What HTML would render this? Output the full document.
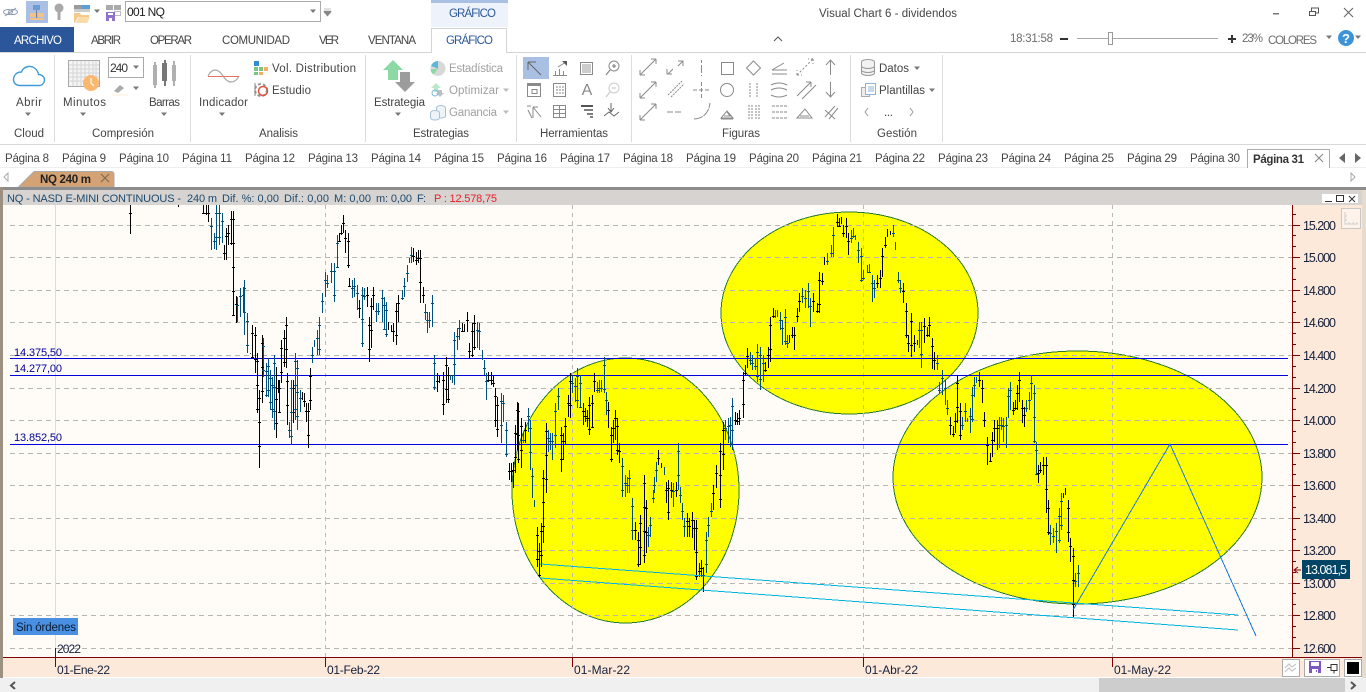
<!DOCTYPE html>
<html lang="es"><head><meta charset="utf-8"><title>Visual Chart 6 - dividendos</title>
<style>
html,body{margin:0;padding:0;width:1366px;height:692px;overflow:hidden;background:#fff}
svg{display:block;font-family:"Liberation Sans",sans-serif;font-size:11.5px;fill:#444}
.g{fill:#a0a0a0}.ic{fill:none;stroke:#8a8a8a;stroke-width:1}
.ax{fill:#14203c;font-size:12.5px}.dt{fill:#14203c;font-size:12px}
.h{fill:#1c4a70;font-size:11px}.lb{fill:#000090;font-size:11px}
.c{shape-rendering:crispEdges}
</style></head><body>
<svg width="1366" height="692" viewBox="0 0 1366 692" xmlns="http://www.w3.org/2000/svg">
<defs>
<path id="da" d="M-8 8L8-8M-8 8h5M-8 8v-5M8-8h-5M8-8v5" fill="none" stroke="#8a8a8a"/>
<path id="ar" d="M-3-1.5h6L0 2z" fill="#777"/>
</defs>
<rect width="1366" height="692" fill="#fff"/>

<!-- quick access -->
<g fill="none" stroke="#8b9bb0"><ellipse cx="8" cy="12" rx="4.5" ry="2.5"/><ellipse cx="13" cy="12" rx="4.5" ry="2.5"/><path d="M5 16L16 8"/></g>
<rect x="26" y="1" width="22" height="22" fill="#a9c0e4"/>
<g class="c"><rect x="33" y="5" width="7" height="5" fill="#6f9bd3"/><rect x="30" y="13" width="6" height="4" fill="#f2c289"/><rect x="38" y="13" width="6" height="4" fill="#f2c289"/><rect x="30" y="18" width="14" height="2" fill="#f2c289"/><rect x="36" y="10" width="1" height="8" fill="#6f7f99"/></g>
<g fill="#a8a8a8"><circle cx="59" cy="8" r="4.5"/><rect x="57.500" y="11" width="3" height="9"/></g>
<g class="c"><rect x="74" y="5" width="8" height="4" fill="#9a9a9a"/><rect x="82" y="5" width="8" height="4" fill="#5aa0d8"/><rect x="74" y="9" width="16" height="3" fill="#ccc"/></g>
<path d="M74 22V13h6l1 2h8v2h-11l-3 6z" fill="#f5c98a"/><path d="M76 23l3-6h11l-3 6z" fill="#f9dca8"/>
<use href="#ar" x="97" y="11"/>
<g class="c"><rect x="106" y="5" width="7" height="5" fill="#aaa"/><rect x="114" y="5" width="7" height="5" fill="#aaa"/><rect x="114.500" y="11.500" width="6" height="4" fill="none" stroke="#bbb"/><rect x="106" y="12" width="9" height="9" fill="#8f72c9"/><rect x="108" y="13" width="5" height="2" fill="#fff"/><rect x="109" y="18" width="3" height="3" fill="#fff"/></g>
<rect x="125.500" y="1.500" width="195" height="20" fill="#fff" stroke="#ababab" class="c"/>
<text x="127" y="16" textLength="38" fill="#222" style="fill:#222;font-size:12px">001 NQ</text>
<use href="#ar" x="313" y="11"/>
<path d="M324 9h7M324 11h7v1l-3.500 4-3.500-4z" fill="#888" stroke="#888" stroke-width=".6"/>

<!-- contextual tab header -->
<rect x="431" y="0" width="77" height="27" fill="#eef3fb" class="c"/><rect x="431" y="0" width="77" height="3" fill="#a9c0e4" class="c"/>
<text x="449" y="17" textLength="47" style="fill:#2b579a">GRÁFICO</text>
<text x="819" y="17" textLength="138">Visual Chart 6 - dividendos</text>

<!-- window controls -->
<path d="M1273 13.500h6" stroke="#777" stroke-width="1.500" class="c"/>
<g fill="none" stroke="#555" class="c"><rect x="1309.500" y="11.500" width="6" height="4"/><path d="M1311.500 11v-3h7v5h-3"/></g>
<path d="M1344 8l9 9M1353 8l-9 9" stroke="#666" stroke-width="1.100"/>

<!-- zoom + clock -->
<text x="1010" y="42" textLength="43" style="fill:#6c6c6c">18:31:58</text>
<rect x="1060" y="38" width="8" height="2" fill="#333" class="c"/>
<rect x="1077" y="38" width="141" height="1" fill="#a8a8a8" class="c"/>
<rect x="1108.500" y="32.500" width="4" height="12" fill="#fff" stroke="#999" class="c"/>
<path d="M1228 39h8M1232 35v8" stroke="#333" stroke-width="2" class="c"/>
<text x="1242" y="42" textLength="21" style="fill:#6c6c6c">23%</text>
<text x="1268" y="44" textLength="49" style="fill:#6c6c6c">COLORES</text>
<use href="#ar" x="1329" y="37"/>
<circle cx="1346" cy="38" r="8" fill="#3d93d8"/><text x="1342" y="43" style="fill:#fff;font-size:13px;font-weight:bold">?</text>
<use href="#ar" x="1358" y="37"/>
<path d="M774 41l4-4 4 4" fill="none" stroke="#555"/>

<!-- ribbon tabs -->
<rect x="0" y="27" width="74" height="25" fill="#2b579a" class="c"/>
<text x="14" y="44" textLength="48" style="fill:#fff">ARCHIVO</text>
<text x="91" y="44" textLength="30">ABRIR</text>
<text x="150" y="44" textLength="42">OPERAR</text>
<text x="222" y="44" textLength="68">COMUNIDAD</text>
<text x="319" y="44" textLength="20">VER</text>
<text x="368" y="44" textLength="48">VENTANA</text>
<path d="M0 52.500H431.500V28.500H506.500V52.500H1366" fill="#fff" stroke="#d4d4d4" class="c"/>
<text x="446" y="44" textLength="47" style="fill:#2b579a">GRÁFICO</text>
<rect x="0" y="144" width="1366" height="1" fill="#d8d8d8" class="c"/>
<path d="M54.500 55V142M190.500 55V142M365.500 55V142M516.500 55V142M631.500 55V142M850.500 55V142M942.500 55V142" stroke="#dcdcdc" class="c"/>

<!-- group: cloud -->
<path d="M20 85.500H39C43 85.500 44.500 82 44.500 80C44.500 76 41 74.500 38.500 74.500C37.500 69 33 66 28.500 66.500C25 67 22.500 69 21.500 72C16 72 13.500 76 13.500 79.500C13.500 83 16 85.500 20 85.500Z" fill="#fff" stroke="#3d9bd9" stroke-width="1.400"/>
<text x="16" y="106" textLength="26">Abrir</text><use href="#ar" x="28" y="114"/>
<text x="14" y="137" textLength="30">Cloud</text>

<!-- group: compresion -->
<g class="c"><rect x="68.500" y="60.500" width="31" height="26" fill="#f4f4f4" stroke="#aaa"/>
<path d="M73 61v25M77 61v25M81 61v25M85 61v25M89 61v25M93 61v25M96 61v25M69 65h30M69 69h30M69 73h30M69 77h30M69 81h30" stroke="#d5d5d5"/></g>
<circle cx="91" cy="83" r="8" fill="#fbb76e"/><path d="M91 78v5l3 3" stroke="#fff" stroke-width="1.200" fill="none"/>
<text x="63" y="106" textLength="43">Minutos</text><use href="#ar" x="83" y="114"/>
<rect x="108.500" y="57.500" width="35" height="20" fill="#fff" stroke="#aaa" class="c"/>
<text x="110" y="72" textLength="18" style="font-size:12px;fill:#333">240</text><use href="#ar" x="136" y="67"/>
<path d="M114 91l6-6 4 3-6 5z" fill="#aaa"/><use href="#ar" x="136" y="88"/>
<path d="M112 95h16" stroke="#fbeed8"/>
<g class="c" fill="#b0b0b0"><rect x="153" y="65" width="4" height="20"/><rect x="154" y="62" width="2" height="26"/><rect x="162" y="63" width="5" height="18" fill="#777"/><rect x="164" y="60" width="2" height="26" fill="#777"/><rect x="172" y="65" width="4" height="16"/><rect x="173" y="61" width="2" height="25"/></g>
<text x="149" y="106" textLength="31">Barras</text><use href="#ar" x="164" y="114"/>
<text x="92" y="137" textLength="62">Compresión</text>

<!-- group: analisis -->
<path d="M208 76C212 68 218 68 223 76S235 84 239 76" fill="none" stroke="#aaa" stroke-width="1.200"/>
<path d="M208 76.500h31" stroke="#e87460" class="c"/>
<text x="199" y="106" textLength="49">Indicador</text><use href="#ar" x="222" y="114"/>
<g class="c"><rect x="254" y="61" width="5" height="5" fill="#2f8fd0"/><rect x="254" y="67" width="4" height="4" fill="#7cc47f"/><rect x="259" y="67" width="4" height="4" fill="#7cc47f"/><rect x="264" y="67" width="4" height="4" fill="#f0b060"/><rect x="254" y="72" width="4" height="3" fill="#7cc47f"/><rect x="259" y="72" width="4" height="3" fill="#f0b060"/></g>
<text x="272" y="72" textLength="84">Vol. Distribution</text>
<circle cx="261" cy="90" r="6" fill="none" stroke="#999" stroke-width="2" stroke-dasharray="3 2"/><circle cx="263" cy="91" r="4.500" fill="none" stroke="#e0533d" stroke-width="1.500"/><path d="M255 83v13" stroke="#888"/>
<text x="272" y="94" textLength="39">Estudio</text>
<text x="259" y="137" textLength="39">Analisis</text>

<!-- group: estrategias -->
<path d="M393 60l10 10h-5v10h-10V70h-5z" fill="#8cd9a5"/>
<path d="M405 92l10-10h-5V72h-10v10h-5z" fill="#9c9c9c"/>
<text x="374" y="106" textLength="51">Estrategia</text><use href="#ar" x="398" y="114"/>
<circle cx="438" cy="68.500" r="7.500" fill="#d8d8d8"/><path d="M438 68.500V61a7.500 7.500 0 0 0-7 5z" fill="#5bb8d8"/><path d="M438 68.500l-7.500 1a7.500 7.500 0 0 0 3 5z" fill="#8cd9a5"/>
<text x="449" y="72" textLength="54" class="g">Estadística</text>
<path d="M436 83l5 5h-3v4h-4v-4h-3z" fill="#bde8c8"/><path d="M440 97l4-4h-2v-3h-4v3h-2z" fill="#c0c0c0"/><circle cx="435" cy="93" r="3" fill="none" stroke="#7eb8e0"/>
<text x="449" y="94" textLength="50" class="g">Optimizar</text><use href="#ar" x="506" y="90" opacity=".5"/>
<g fill="#eef3f8" stroke="#a8c0d8"><ellipse cx="441" cy="108" rx="4.500" ry="2.500"/><path d="M436.500 108v8a4.500 2 0 0 0 9 0v-8"/><ellipse cx="435" cy="113" rx="4.500" ry="2.500"/><path d="M430.500 113v5a4.500 2 0 0 0 9 0v-5"/></g>
<text x="449" y="116" textLength="48" class="g">Ganancia</text><use href="#ar" x="506" y="112" opacity=".5"/>
<text x="413" y="137" textLength="56">Estrategias</text>

<!-- group: herramientas -->
<rect x="523" y="57" width="26" height="22" fill="#a9c0e4" class="c"/>
<g class="ic">
<path d="M541 75L528 62M528 62h8M528 62v8" stroke="#666"/>
<path d="M553 75.500h14M555.500 75v-4M559.500 75v-6M563.500 75v-4M558 67l8-5"/><path d="M562 61h5v5z" fill="#555" stroke="none"/>
<rect x="580.500" y="62.500" width="12" height="12"/><rect x="582" y="64" width="9" height="9" fill="#ccc" stroke="none"/>
<circle cx="614" cy="66" r="5"/><path d="M610 70l-4 5M612 66h4M614 64v4" stroke-width="1.300"/>
<rect x="527.500" y="83.500" width="13" height="13"/><path d="M527 85h14" stroke-width="2"/><rect x="532" y="89.500" width="5" height="4"/>
<rect x="553.500" y="83.500" width="12" height="13"/><path d="M557 86v8M560 86v8M563 86v8" stroke-dasharray="2 1"/>
<circle cx="614" cy="88" r="5" stroke="#ccc"/><path d="M610 92l-4 5M612 88h4" stroke="#ccc" stroke-width="1.300"/>
<path d="M527 106h4M532 118l-4-8M533 118v-11M533 107l8 10M533 107h5M533 107v5"/>
<rect x="553.500" y="105.500" width="12" height="12"/><path d="M554 109.500h11M554 113.500h11M559.500 106v11"/>
<path d="M581 106h12" stroke="#555" stroke-width="2"/><path d="M584 110h9M587 114h6M590 117h3" stroke="#555" stroke-width="1.500"/>
<path d="M604 116l5-4 5 4 5-4M611 103v9M608 108l3 4 3-4" stroke="#666"/>
</g>
<text x="587" y="95" text-anchor="middle" style="font-size:16px;fill:#8a8a8a">A</text>
<text x="540" y="137" textLength="68">Herramientas</text>

<!-- group: figuras -->
<use href="#da" x="648" y="67"/><use href="#da" x="648" y="90"/><use href="#da" x="648" y="112"/>
<g class="ic">
<path d="M668 74l5-5M672 74h-5v-5M678 66l5-5M678 61h5v5"/>
<path d="M701.500 60v3M701.500 65v8M701.500 75v1"/>
<rect x="721.500" y="62.500" width="12" height="12"/>
<path d="M753.500 61l7 7-7 7-7-7z"/>
<path d="M772 74h15M772 70h15M772 70l12-7" />
<use href="#da" x="805" y="67" stroke-dasharray="2 2"/>
<path d="M830.500 75V60M826 65l4.500-5 4.500 5"/>
<path d="M668 95l14-14M671 97l13-13" stroke-dasharray="2 1"/>
<path d="M693 90h16M701.500 82v16" stroke-dasharray="4 2"/>
<circle cx="727" cy="90" r="6.500"/>
<path d="M750 83v14M757 83v14" stroke-dasharray="2 1"/>
<path d="M771 85q8-4 16 0M771 90q8-4 16 0M771 95q8 4 16 0"/>
<path d="M797 96l14-14M802 99l14-14M811 82h-5M811 82v5"/>
<path d="M830.500 82v15M826 92l4.500 5 4.500-5"/>
<path d="M667 112h16" stroke-dasharray="6 2"/>
<path d="M694 119q14-1 16-16" stroke-dasharray="9 1"/>
<path d="M721 118h12l-6-7zM724 116h6l-3-4M721 119h12"/>
<path d="M749 105v14M752 105v14M756 105v14M759 105v14" stroke-dasharray="2 1"/>
<path d="M772 106h15M772 112h15M772 118h15" stroke-dasharray="3 1"/>
<path d="M797 118h15l-7-9zM800 116h9"/>
<path d="M825 117l10-11M829 119l9-11M825 110l10 9"/>
</g>
<text x="722" y="137" textLength="38">Figuras</text>

<!-- group: gestion -->
<g fill="#f2f2f2" stroke="#999"><ellipse cx="868" cy="62" rx="6.500" ry="2.500"/><path d="M861.500 62v11a6.500 2.500 0 0 0 13 0V62"/><path d="M861.500 66a6.500 2.500 0 0 0 13 0M861.500 70a6.500 2.500 0 0 0 13 0" fill="none"/></g>
<text x="879" y="72" textLength="30">Datos</text><use href="#ar" x="917" y="68"/>
<g class="c"><rect x="861.500" y="87.500" width="8" height="9" fill="#eee" stroke="#aaa"/><rect x="865.500" y="83.500" width="10" height="11" fill="#fff" stroke="#8db4dc"/><path d="M868 87h6M868 89h6M868 91h6" stroke="#8db4dc"/></g>
<text x="879" y="94" textLength="46">Plantillas</text><use href="#ar" x="932" y="90"/>
<path d="M868 108l-3 4 3 4M910 108l3 4-3 4" fill="none" stroke="#999"/>
<text x="884" y="116" textLength="9">...</text>
<text x="877" y="137" textLength="40">Gestión</text>

<!-- page tabs -->
<rect x="0" y="167" width="1366" height="1" fill="#eee" class="c"/>
<g>
<text x="5" y="162" textLength="44">Página 8</text><text x="62" y="162" textLength="44">Página 9</text>
<text x="119" y="162" textLength="50">Página 10</text><text x="182" y="162" textLength="50">Página 11</text>
<text x="245" y="162" textLength="50">Página 12</text><text x="308" y="162" textLength="50">Página 13</text>
<text x="371" y="162" textLength="50">Página 14</text><text x="434" y="162" textLength="50">Página 15</text>
<text x="497" y="162" textLength="50">Página 16</text><text x="560" y="162" textLength="50">Página 17</text>
<text x="623" y="162" textLength="50">Página 18</text><text x="686" y="162" textLength="50">Página 19</text>
<text x="749" y="162" textLength="50">Página 20</text><text x="812" y="162" textLength="50">Página 21</text>
<text x="875" y="162" textLength="50">Página 22</text><text x="938" y="162" textLength="50">Página 23</text>
<text x="1001" y="162" textLength="50">Página 24</text><text x="1064" y="162" textLength="50">Página 25</text>
<text x="1127" y="162" textLength="50">Página 29</text><text x="1190" y="162" textLength="50">Página 30</text>
</g>
<path d="M1247.500 168V149.500H1329.500V168" fill="#fff" stroke="#aaa" class="c"/>
<text x="1253" y="163" textLength="51" style="font-weight:bold;fill:#333">Página 31</text>
<path d="M1315 154l8 8M1323 154l-8 8" stroke="#888" stroke-width="1.100"/>
<path d="M1345 153v10l-6-5zM1355 153v10l6-5z" fill="#666"/>

<!-- document tab row -->
<path d="M8 173v8l-4-4z" fill="none" stroke="#aaa"/>
<path d="M18.500 187L34 171.500H111q3 0 3 3V187z" fill="#d4a273" stroke="#aaa"/>
<text x="40" y="183" textLength="51" style="font-weight:bold;fill:#222;font-size:11.500px">NQ 240 m</text>
<path d="M101 174l8 8M109 174l-8 8" stroke="#7f6a55" stroke-width="1.200"/>
<path d="M1351 173v8l4-4z" fill="none" stroke="#aaa"/>

<!-- chart frame -->
<rect x="0" y="187" width="1366" height="3" fill="#8c8c8c" class="c"/>
<rect x="0" y="187" width="3" height="491" fill="#9c9080" class="c"/>
<rect x="3" y="190" width="1360" height="15" fill="#d6d3d0" class="c"/>
<text x="7" y="202" textLength="174" class="h">NQ - NASD E-MINI CONTINUOUS -</text>
<text x="187" y="202" textLength="30" class="h">240 m</text>
<text x="222" y="202" textLength="57" class="h">Dif. %: 0,00</text>
<text x="284" y="202" textLength="45" class="h">Dif.: 0,00</text>
<text x="334" y="202" textLength="37" class="h">M: 0,00</text>
<text x="376" y="202" textLength="36" class="h">m: 0,00</text>
<text x="417" y="202" textLength="9" class="h">F:</text>
<text x="434" y="202" textLength="63" style="font-size:11px;fill:#ee1c25">P : 12.578,75</text>
<rect x="1322" y="194" width="36" height="9" fill="#fff" class="c"/>
<path d="M1325 201.500h7" stroke="#333" class="c"/><rect x="1336.500" y="195.500" width="7" height="6" fill="none" stroke="#333" class="c"/><path d="M1349 196l6 6M1355 196l-6 6" stroke="#333"/>

<rect x="3" y="205" width="1290" height="452" fill="#fffcf8" class="c"/>
<rect x="1293" y="205" width="69" height="472" fill="#fde9d9" class="c"/>
<rect x="3" y="658" width="1290" height="19" fill="#fde9d9" class="c"/>
<rect x="1362" y="190" width="4" height="488" fill="#e6dccd" class="c"/>

<!-- ellipses -->
<g fill="#ffff00" stroke="#2a7a2a" class="c">
<ellipse cx="625.500" cy="490.500" rx="113.500" ry="132.500"/>
<ellipse cx="849.500" cy="313" rx="128.500" ry="101"/>
<ellipse cx="1077.500" cy="477.500" rx="184.500" ry="126.500"/>
</g>

<!-- grid -->
<path class="c" stroke="#b8b4b0" stroke-dasharray="5 4" fill="none" d="M10 225.500H1292M10 257.500H1292M10 290.500H1292M10 322.500H1292M10 355.500H1292M10 388.500H1292M10 420.500H1292M10 453.500H1292M10 485.500H1292M10 518.500H1292M10 550.500H1292M10 583.500H1292M10 615.500H1292M10 648.500H1292"/>
<path class="c" stroke="#bbb" stroke-dasharray="4 4" fill="none" d="M325.500 205V657M572.500 205V657M863.500 205V657M1112.500 205V657"/>
<path class="c" stroke="#dcdcdc" fill="none" d="M55.500 205V657"/>

<!-- horizontal levels -->
<path class="c" stroke="#0000d8" d="M10 358.500H1288M10 375.500H1288"/><path class="c" stroke="#0000e0" d="M10 444.500H1288"/>
<text x="14" y="356" textLength="48" class="lb">14.375,50</text>
<text x="14" y="372" textLength="48" class="lb">14.277,00</text>
<text x="14" y="441" textLength="48" class="lb">13.852,50</text>

<!-- price bars -->
<g transform="translate(.5 0)" fill="none" class="c">
<path id="b1" stroke="#000" d="M130 205V234M178 205V207M203 205V214M206 205V215M208 205V222M224 245V260M226 228V260M228 225V245M231 211V245M233 211V316M236 296V323M252 325V358M255 327V373M257 353V413M259 390V468M262 335V403M276 367V438M278 380V393M279 380V413M281 340V383M284 330V367M286 317V368M287 373V425M293 380V423M302 392V400M304 393V407M306 403V422M308 403V448M310 368V410M339 233V242M341 225V235M343 215V233M345 230V253M348 233V268M349 278V287M359 300V318M367 287V307M369 317V362M371 298V348M373 287V310M388 322V330M391 325V332M393 323V342M396 303V345M398 295V322M413 248V262M416 252V265M418 250V263M420 250V303M423 287V303M437 373V392M439 376V383M443 372V415M446 357V403M448 367V403M462 323V332M464 324V332M467 312V332M469 343V358M472 323V357M474 315V350M488 372V382M491 372V385M493 375V387M495 388V427M497 397V437M509 463V480M511 463V482M513 462V488M515 425V473M517 402V450M518 403V463M521 418V468M525 422V443M537 527V567M539 543V577M541 523V567M543 470V543M546 423V493M561 427V472M563 433V460M565 418V445M568 395V417M570 373V418M583 403V425M585 408V422M587 410V427M589 397V435M592 395V428M594 373V392M608 402V428M611 427V462M613 420V443M615 410V440M617 418V455M619 443V463M635 522V540M638 532V567M640 515V565M644 475V563M646 500V553M658 450V465M661 463V468M666 482V503M668 480V520M671 482V498M676 482V497M687 513V537M689 518V537M692 512V538M694 520V550M696 520V580M699 563V577M701 560V577M703 567V592M713 485V510M716 465V488M720 443V508M723 422V470M735 412V425M737 413V425M739 410V425M743 372V418M745 365V375M747 348V368M765 362V372M768 347V368M770 317V362M773 308V318M789 335V343M792 327V338M794 327V350M797 308V322M799 293V312M813 293V312M817 303V313M819 272V313M822 273V285M824 257V265M837 214V227M839 218V227M841 217V224M843 225V237M846 218V238M848 233V255M877 275V288M880 270V288M882 248V277M885 237V248M887 229V237M890 231V235M903 283V303M906 303V338M908 335V352M911 313V357M914 335V352M917 340V345M924 318V343M927 327V337M929 317V337M932 338V369M934 352V370M950 417V435M953 426V437M955 413V433M957 375V423M960 403V440M979 372V387M982 380V403M984 412V427M987 437V465M990 453V462M992 432V457M994 420V442M997 420V450M1013 402V415M1015 400V410M1017 385V410M1019 372V402M1022 400V423M1024 407V427M1038 465V483M1040 462V473M1043 457V475M1046 457V513M1048 500V535M1063 493V498M1065 488V495M1068 500V542M1070 538V562M1073 548V617"/>
<path id="u1" stroke="#00507e" d="M211 218V250M214 233V249M216 205V250M219 205V245M222 213V243M237 297V322M240 288V317M243 287V313M244 280V335M247 313V353M250 353V354M263 338V377M266 363V397M268 358V397M270 370V410M272 377V418M274 355V430M289 422V438M291 380V445M295 353V420M297 360V430M300 390V412M312 347V363M314 340V347M317 330V355M319 317V355M322 293V313M325 272V297M327 275V288M331 263V283M334 263V302M337 235V268M352 280V298M354 278V297M357 285V310M362 287V347M364 288V300M376 303V322M378 303V315M382 290V322M384 297V330M386 302V337M402 290V300M404 278V297M407 265V282M409 258V263M411 247V263M425 304V320M427 312V333M429 312V328M432 295V327M434 355V390M450 375V380M452 375V383M454 332V385M457 328V350M459 320V340M477 322V348M479 323V350M482 350V360M484 360V375M486 373V400M501 393V443M503 395V422M506 422V457M523 432V443M528 408V432M530 420V470M532 468V498M534 500V507M548 430V452M550 433V450M552 433V460M555 403V448M558 388V410M572 375V393M575 378V402M577 368V408M580 375V408M597 382V393M599 380V393M601 380V392M604 357V393M606 392V415M622 458V497M625 475V497M627 477V493M629 470V493M632 498V540M648 527V547M650 517V537M653 490V503M654 477V493M656 462V482M664 467V475M673 483V507M678 443V490M680 487V503M682 503V520M684 518V537M706 532V573M708 517V537M711 503V517M725 420V440M728 418V443M730 417V447M732 398V450M750 352V365M752 355V370M755 358V370M757 344V382M760 347V390M763 355V382M775 310V318M777 310V317M780 312V330M782 320V345M785 309V345M787 335V348M802 288V303M805 290V308M808 283V308M810 298V327M827 253V265M831 245V257M833 227V257M851 230V243M853 228V238M855 235V240M858 242V263M861 248V282M863 270V280M867 265V273M869 264V273M872 275V302M874 280V298M893 225V237M895 242V250M898 272V283M900 280V293M919 322V348M921 322V368M937 355V370M939 382V393M942 370V395M945 380V405M947 400V415M962 417V430M965 403V422M967 418V422M970 408V433M972 387V422M974 377V397M976 377V383M999 417V448M1001 417V430M1003 418V442M1006 417V448M1008 388V418M1010 382V410M1026 400V412M1029 392V410M1031 375V400M1034 385V443M1036 442V475M1050 525V545M1053 528V543M1056 523V553M1059 508V543M1061 493V530M1075 573V587M1078 565V587"/>
<use href="#b1" stroke-width="3" stroke-dasharray="1 23" stroke-dashoffset="-8"/>
<use href="#u1" stroke-width="3" stroke-dasharray="1 23" stroke-dashoffset="-8"/>
</g>

<!-- trend lines -->
<g fill="none" class="c"><path stroke="#00b4e0" d="M540 564L1238 615M540 578L1238 630"/><path stroke="#1478d8" d="M1073 610L1170 444L1256 636"/></g>

<!-- orders, year -->
<rect x="13" y="618" width="65" height="17" fill="#4a90e2" class="c"/>
<text x="16" y="631" textLength="60" style="fill:#0a1a30;font-size:11.500px">Sin órdenes</text>
<text x="57" y="653" textLength="24" class="dt">2022</text>

<!-- axes -->
<path class="c" stroke="#800000" fill="none" d="M1292.500 205V657M3 657.500H1362M55.500 648V667M325.500 657V667M572.500 657V667M863.500 657V667M1112.500 657V667"/>
<path class="c" stroke="#800000" d="M1292 225.500h8M1292 257.500h8M1292 290.500h8M1292 322.500h8M1292 355.500h8M1292 388.500h8M1292 420.500h8M1292 453.500h8M1292 485.500h8M1292 518.500h8M1292 550.500h8M1292 583.500h8M1292 615.500h8M1292 648.500h8M1292 214.500h4M1292 235.500h4M1292 246.500h4M1292 268.500h4M1292 279.500h4M1292 301.500h4M1292 312.500h4M1292 333.500h4M1292 344.500h4M1292 366.500h4M1292 377.500h4M1292 398.500h4M1292 409.500h4M1292 431.500h4M1292 442.500h4M1292 464.500h4M1292 474.500h4M1292 496.500h4M1292 507.500h4M1292 529.500h4M1292 539.500h4M1292 561.500h4M1292 572.500h4M1292 593.500h4M1292 604.500h4M1292 626.500h4M1292 637.500h4"/>
<g class="ax">
<text x="1303" y="230" textLength="33">15.200</text><text x="1303" y="262" textLength="33">15.000</text>
<text x="1303" y="295" textLength="33">14.800</text><text x="1303" y="327" textLength="33">14.600</text>
<text x="1303" y="360" textLength="33">14.400</text><text x="1303" y="393" textLength="33">14.200</text>
<text x="1303" y="425" textLength="33">14.000</text><text x="1303" y="458" textLength="33">13.800</text>
<text x="1303" y="490" textLength="33">13.600</text><text x="1303" y="523" textLength="33">13.400</text>
<text x="1303" y="555" textLength="33">13.200</text><text x="1303" y="588" textLength="33">13.000</text>
<text x="1303" y="620" textLength="33">12.800</text><text x="1303" y="653" textLength="33">12.600</text>
</g>
<rect x="1302" y="560" width="48" height="19" fill="#004466" class="c"/>
<text x="1305" y="574" textLength="42" style="fill:#fff;font-size:12.5px">13.081,5</text>
<path d="M1301 570h-7M1298 567l-4 3 4 3" fill="none" stroke="#800000"/>
<g class="dt">
<text x="57" y="674" textLength="53">01-Ene-22</text><text x="327" y="674" textLength="53">01-Feb-22</text>
<text x="574" y="674" textLength="56">01-Mar-22</text><text x="865" y="674" textLength="53">01-Abr-22</text>
<text x="1114" y="674" textLength="57">01-May-22</text>
</g>

<!-- chart corner icon -->
<rect x="1341.500" y="208.500" width="19" height="20" fill="#fdf3ea" stroke="#c8c8c8" class="c"/>
<path d="M1345 212v12h13M1349 224v-2M1353 224v-2M1357 224v-2M1345 216h2M1345 220h2" fill="none" stroke="#cfcfcf"/>

<!-- bottom-right buttons -->
<rect x="1282.500" y="659.500" width="17" height="17" fill="#fff" stroke="#aaa" class="c"/>
<path d="M1285 668l4-4 3 3 4-3M1285 672l4-4 3 3 4-3" fill="none" stroke="#c4c4c4" stroke-width="1.200"/>
<rect x="1304.500" y="659.500" width="35" height="17" fill="#fff" stroke="#aaa" class="c"/>
<g class="c"><rect x="1309" y="661" width="12" height="12" fill="#7e57c2"/><rect x="1311" y="662" width="8" height="4" fill="#fff"/><rect x="1312" y="669" width="6" height="4" fill="#fff"/><rect x="1316" y="670" width="1" height="2" fill="#7e57c2"/></g>
<path d="M1327 667.500h4M1331 664.500v6h6v-6zM1334 670.500v3" fill="none" stroke="#333" class="c"/>
<rect x="1344.500" y="659.500" width="17" height="17" fill="#fff" stroke="#aaa" class="c"/>
<rect x="1347" y="662" width="12" height="12" fill="#000" class="c"/>

<!-- scrollbar -->
<rect x="0" y="678" width="1366" height="14" fill="#f0f0f0" class="c"/>
<rect x="1099" y="678" width="246" height="14" fill="#cdcdcd" class="c"/>
<path d="M15 682l-4 3.500 4 3.500M1351 682l4 3.500-4 3.500" fill="none" stroke="#555" stroke-width="2"/>
</svg>
</body></html>
